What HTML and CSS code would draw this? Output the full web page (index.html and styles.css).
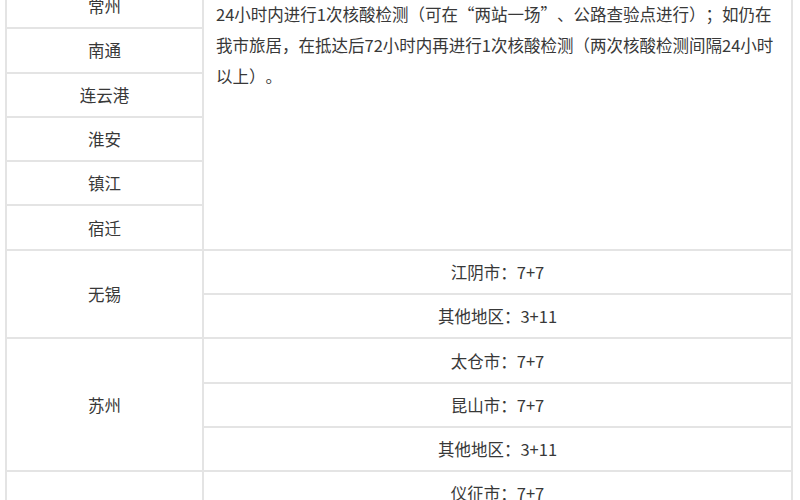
FILE: index.html
```html
<!DOCTYPE html>
<html lang="zh-CN">
<head>
<meta charset="utf-8">
<title>江苏各市管控措施</title>
<link rel="stylesheet" href="styles.css">
</head>
<body>
<div class="page">
  <table class="rules">
    <colgroup>
      <col class="col-city">
      <col class="col-policy">
    </colgroup>
    <tbody>
      <tr>
        <td class="city">常州</td>
        <td class="policy" rowspan="6">24小时内进行1次核酸检测（可在“两站一场”、公路查验点进行）；如仍在我市旅居，在抵达后72小时内再进行1次核酸检测（两次核酸检测间隔24小时以上）。</td>
      </tr>
      <tr><td class="city">南通</td></tr>
      <tr><td class="city">连云港</td></tr>
      <tr><td class="city">淮安</td></tr>
      <tr><td class="city">镇江</td></tr>
      <tr><td class="city">宿迁</td></tr>
      <tr>
        <td class="city" rowspan="2">无锡</td>
        <td class="sub">江阴市：7+7</td>
      </tr>
      <tr><td class="sub">其他地区：3+11</td></tr>
      <tr>
        <td class="city" rowspan="3">苏州</td>
        <td class="sub">太仓市：7+7</td>
      </tr>
      <tr><td class="sub">昆山市：7+7</td></tr>
      <tr><td class="sub">其他地区：3+11</td></tr>
      <tr>
        <td class="city" rowspan="2">扬州</td>
        <td class="sub">仪征市：7+7</td>
      </tr>
      <tr><td class="sub">其他地区：3+11</td></tr>
    </tbody>
  </table>
</div>
</body>
</html>
```

FILE: styles.css
```css
html, body {
  margin: 0;
  padding: 0;
  background: #ffffff;
}

body {
  font-family: "Noto Sans CJK SC", "Noto Sans", "Liberation Sans", sans-serif;
  font-size: 16.5px;
  color: #383838;
  overflow: hidden;
  text-spacing-trim: space-all;
}

.page {
  padding: 0 7px 0 5px;
  margin-top: -17px;
}

.rules {
  width: 788px;
  border-collapse: collapse;
  table-layout: fixed;
}

.col-city {
  width: 197px;
}

.rules td {
  border: 2px solid #e4e4e4;
  height: 44.3px;
  box-sizing: border-box;
  padding: 0 12px;
  line-height: 24px;
  text-align: center;
  vertical-align: middle;
}

.rules td.policy {
  text-align: left;
  vertical-align: top;
  padding: 14px 12px 0 12px;
  line-height: 31px;
}
```
